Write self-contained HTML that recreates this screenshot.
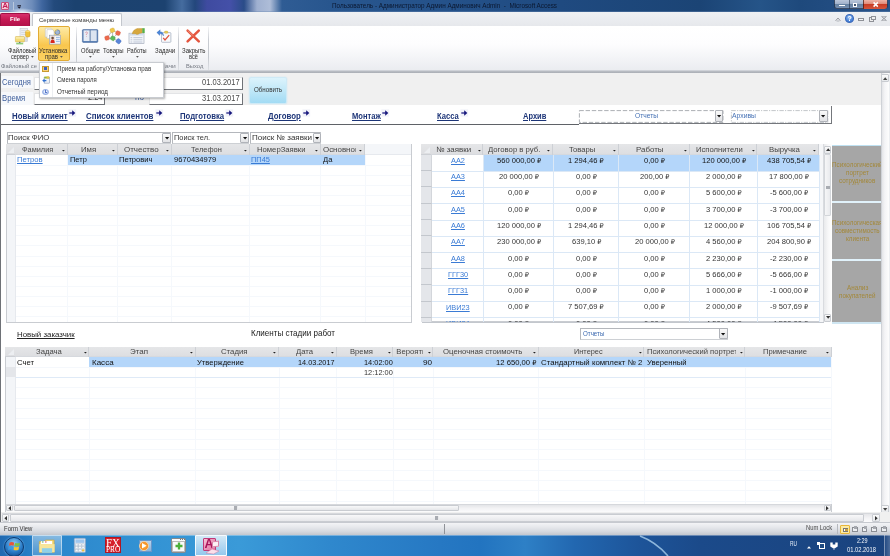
<!DOCTYPE html><html lang="ru"><head><meta charset="utf-8"><title>Microsoft Access</title><style>
*{box-sizing:border-box}
html,body{margin:0;padding:0}
body{width:890px;height:556px;position:relative;overflow:hidden;background:#fff;font-family:"Liberation Sans","DejaVu Sans",sans-serif;font-size:8px;color:#222}
.a{position:absolute}
.t{position:absolute;white-space:nowrap;line-height:1}
.u{text-decoration:underline}
.rb{font-size:.86em}
svg{position:absolute;overflow:visible}
#root{position:absolute;left:0;top:0;width:890px;height:556px;overflow:hidden;will-change:transform;filter:blur(.3px)}
</style></head><body><div id="root">
<div class="a" style="left:0px;top:0px;width:890px;height:12px;background:linear-gradient(90deg,#90a8cc 0,#86a0c8 22px,#6d8cba 32px,#3f669f 42px,#234a7c 54px,#1b426f 75px,#1c4270 165px,#456c9f 182px,#23477c 195px,#3f4ba0 207px,#4450a8 230px,#2a4c88 244px,#9fb0d0 257px,#aebdd8 270px,#2f5c94 282px,#28568e 330px,#25528a 445px,#1f4a80 560px,#1b4475 700px,#255488 760px,#1e497c 800px,#224d82 840px,#28548a 890px)"></div>
<div class="a" style="left:0px;top:10.5px;width:890px;height:1.5px;background:linear-gradient(rgba(20,50,100,.1),rgba(120,150,190,.7))"></div>
<div class="a" style="left:1px;top:2px;width:8px;height:8px;background:linear-gradient(135deg,#fbe3ea,#f2b8c8);border:1px solid #c8507a;border-radius:1px"></div>
<div class="t" style="left:2.2px;top:2.4px;font-size:8px;color:#c41e58;font-weight:bold">A</div>
<div class="a" style="left:8px;top:8px;width:28px;height:4px;background:radial-gradient(ellipse at 50% 100%,rgba(235,243,252,.9),rgba(235,243,252,0) 70%)"></div>
<div class="a" style="left:12.6px;top:2px;width:0.6px;height:8px;background:#b9c8dd"></div>
<svg style="left:16.8px;top:5px" width="4.4" height="4"><rect x="0.4" y="0" width="3.6" height="0.8" fill="#223"/><path d="M0.2 1.6h4l-2 2.2z" fill="#223"/></svg>
<div class="t" style="left:331.8px;top:2.57px;font-size:6.3px;color:#0b1830;transform:scaleX(1.0074);transform-origin:0 0;">Пользователь - Администратор Админ Админович Admin&nbsp; -&nbsp; Microsoft Access</div>
<div class="a" style="left:833.6px;top:0px;width:54.6px;height:9.2px;border:1px solid rgba(20,35,60,.75);border-top:none;border-radius:0 0 3px 3px;background:linear-gradient(#b9c6da 0,#a2b3cc 45%,#64809f 50%,#7690b2 100%)"></div>
<div class="a" style="left:848.6px;top:0px;width:0.8px;height:8.6px;background:rgba(30,45,70,.6)"></div>
<div class="a" style="left:863px;top:0px;width:24.4px;height:8.5px;background:linear-gradient(#eeb3a6 0,#e08a78 45%,#c93c24 50%,#d4553c 100%);border-radius:0 0 2.4px 0;border-left:.8px solid rgba(60,20,15,.7)"></div>
<div class="a" style="left:839px;top:4.7px;width:5.6px;height:1.8px;background:#fff;box-shadow:0 0 .6px #223"></div>
<div class="a" style="left:853px;top:2.6px;width:4.4px;height:4.2px;border:1.2px solid #fff;background:#3a4f70;box-shadow:0 0 .6px #223"></div>
<svg style="left:872.6px;top:1.6px" width="5.4" height="5"><path d="M0.6 0.4L4.8 4.6M4.8 0.4L0.6 4.6" stroke="#fff" stroke-width="1.5"/></svg>
<div class="a" style="left:0px;top:12px;width:890px;height:13.5px;background:linear-gradient(#eff1f4,#e6e8ec)"></div>
<div class="a" style="left:0px;top:12.5px;width:30px;height:13px;background:linear-gradient(#d8306c,#c61a54 45%,#b2124a);border:1px solid #a01044;border-bottom:none;border-radius:2px 2px 0 0"></div>
<div class="t" style="left:10.2px;top:15.55px;font-size:6.2px;color:#fff;font-weight:bold;transform:scaleX(0.9500);transform-origin:0 0;">File</div>
<div class="a" style="left:32px;top:13px;width:90px;height:13px;background:#fff;border:1px solid #c3c7cd;border-bottom:none;border-radius:2px 2px 0 0"></div>
<div class="t" style="left:39.1px;top:17.22px;font-size:6px;color:#3a3a3a;transform:scaleX(1.0031);transform-origin:0 0;">Сервисные команды меню</div>
<svg style="left:835px;top:16.6px" width="6" height="4.6"><path d="M0.6 3.8L3 1L5.4 3.8" fill="none" stroke="#8e9197" stroke-width=".9"/><path d="M1.6 4h2.8" stroke="#8e9197" stroke-width=".6"/></svg>
<div class="a" style="left:844.8px;top:14.2px;width:9px;height:8.6px;background:radial-gradient(circle at 45% 35%,#9cc4f4,#4a84d8 60%,#3a6cc8);border-radius:50%;border:.5px solid #3a68b8"></div>
<div class="t" style="left:847.4px;top:15.2px;font-size:7px;color:#fff;font-weight:bold">?</div>
<div class="a" style="left:858px;top:18.2px;width:6px;height:2.6px;border:.9px solid #8e9197;background:#f4f5f7"></div>
<div class="a" style="left:869px;top:17.2px;width:4.6px;height:4.4px;border:.9px solid #8e9197;background:#eee"></div>
<div class="a" style="left:871px;top:15.7px;width:4.6px;height:4.4px;border:.9px solid #8e9197;background:#eee"></div>
<svg style="left:881.4px;top:16px" width="6" height="5"><path d="M0.6 0.5L5.4 4.5M5.4 0.5L0.6 4.5" stroke="#8e9197" stroke-width=".9"/><path d="M0.6 0.5h4.8M0.6 4.5h4.8" stroke="#8e9197" stroke-width=".5"/></svg>
<div class="a" style="left:0px;top:25.5px;width:890px;height:46px;background:linear-gradient(#fff 0,#fdfdfe 40%,#f3f4f7 70%,#e9ebef 100%)"></div>
<div class="a" style="left:0px;top:70.3px;width:890px;height:1px;background:#cfd2d8"></div>
<div class="a" style="left:0px;top:71.3px;width:890px;height:1.8px;background:linear-gradient(#bcc0c6,#a9adb4)"></div>
<div class="a" style="left:76.3px;top:27px;width:0.7px;height:42.5px;background:linear-gradient(rgba(200,204,210,.2),#c9ccd2 30%,#c4c8ce 70%,rgba(200,204,210,.4))"></div>
<div class="a" style="left:150.8px;top:27px;width:0.7px;height:42.5px;background:linear-gradient(rgba(200,204,210,.2),#c9ccd2 30%,#c4c8ce 70%,rgba(200,204,210,.4))"></div>
<div class="a" style="left:178.2px;top:27px;width:0.7px;height:42.5px;background:linear-gradient(rgba(200,204,210,.2),#c9ccd2 30%,#c4c8ce 70%,rgba(200,204,210,.4))"></div>
<div class="a" style="left:208.3px;top:27px;width:0.7px;height:42.5px;background:linear-gradient(rgba(200,204,210,.2),#c9ccd2 30%,#c4c8ce 70%,rgba(200,204,210,.4))"></div>
<div class="a" style="left:38.2px;top:26.1px;width:31.5px;height:35px;background:linear-gradient(#fdeaa6 0,#fbd978 30%,#f9c64e 55%,#fbd262 100%);border:1px solid #e2ab34;border-radius:2px"></div>
<div class="t" style="left:8px;top:47.50px;font-size:6.5px;color:#2b2b2b;transform:scaleX(0.8995);transform-origin:0 0;">Файловый</div>
<div class="t" style="left:10.5px;top:53.70px;font-size:6.5px;color:#2b2b2b;transform:scaleX(0.8505);transform-origin:0 0;">сервер</div>
<div class="t" style="left:39.3px;top:47.50px;font-size:6.5px;color:#2b2b2b;transform:scaleX(0.9232);transform-origin:0 0;">Установка</div>
<div class="t" style="left:45.1px;top:53.70px;font-size:6.5px;color:#2b2b2b;transform:scaleX(0.9153);transform-origin:0 0;">прав</div>
<div class="t" style="left:81px;top:47.50px;font-size:6.5px;color:#2b2b2b;transform:scaleX(0.8843);transform-origin:0 0;">Общие</div>
<div class="t" style="left:103.2px;top:47.50px;font-size:6.5px;color:#2b2b2b;transform:scaleX(0.9241);transform-origin:0 0;">Товары</div>
<div class="t" style="left:127px;top:47.50px;font-size:6.5px;color:#2b2b2b;transform:scaleX(0.8676);transform-origin:0 0;">Работы</div>
<div class="t" style="left:154.5px;top:47.50px;font-size:6.5px;color:#2b2b2b;transform:scaleX(0.9241);transform-origin:0 0;">Задачи</div>
<div class="t" style="left:182.4px;top:47.50px;font-size:6.5px;color:#2b2b2b;transform:scaleX(0.9347);transform-origin:0 0;">Закрыть</div>
<div class="t" style="left:189px;top:53.70px;font-size:6.5px;color:#2b2b2b;transform:scaleX(0.8722);transform-origin:0 0;">всё</div>
<svg style="left:31px;top:56.3px" width="2.8" height="1.8"><path d="M0 0h2.8L1.4 1.8z" fill="#555"/></svg>
<svg style="left:59.8px;top:56.3px" width="2.8" height="1.8"><path d="M0 0h2.8L1.4 1.8z" fill="#555"/></svg>
<svg style="left:89px;top:56.3px" width="2.8" height="1.8"><path d="M0 0h2.8L1.4 1.8z" fill="#555"/></svg>
<svg style="left:112.4px;top:56.3px" width="2.8" height="1.8"><path d="M0 0h2.8L1.4 1.8z" fill="#555"/></svg>
<svg style="left:135.6px;top:56.3px" width="2.8" height="1.8"><path d="M0 0h2.8L1.4 1.8z" fill="#555"/></svg>
<div class="t" style="left:1.2px;top:62.65px;font-size:6.2px;color:#757a82;transform:scaleX(0.9404);transform-origin:0 0;">Файловый се</div>
<div class="t" style="left:164.5px;top:62.65px;font-size:6.2px;color:#757a82;transform:scaleX(1.0846);transform-origin:0 0;">ачи</div>
<div class="t" style="left:185.5px;top:62.65px;font-size:6.2px;color:#757a82;transform:scaleX(0.9329);transform-origin:0 0;">Выход</div>
<svg style="left:0;top:0" width="220" height="50" viewBox="0 0 220 50"><rect x="20" y="28.3" width="7.6" height="13.2" fill="#eef0f3" stroke="#b9bdc5" stroke-width=".5"/><path d="M21.2 30.4h5M21.2 32.4h5M21.2 34.4h5" stroke="#c3c8d2" stroke-width=".6"/><rect x="24.4" y="37" width="3" height="4.2" fill="#d9dce2"/><rect x="25.5" y="30.6" width="4.6" height="6.4" rx="1.6" fill="#f1c23a" stroke="#c4962a" stroke-width=".4"/><ellipse cx="27.8" cy="31.3" rx="2.1" ry=".8" fill="#f9dc7c"/><rect x="15.4" y="36.6" width="9" height="5.3" rx=".5" fill="#f5dc78" stroke="#cfae4a" stroke-width=".5"/><rect x="15.8" y="37.2" width="8.2" height="1.4" fill="#fbeeb0"/><rect x="16.2" y="42.7" width="7" height="1.7" fill="#8ecb7a"/><rect x="19" y="41.9" width="1.4" height="1" fill="#667"/><path d="M45.3 28.2h5.4l1.6 1.6v7.2h-7z" fill="#fdfdfd" stroke="#b4b8bf" stroke-width=".5"/><path d="M47 29.6h5.4l1.6 1.6v7.2h-7z" fill="#fff" stroke="#b4b8bf" stroke-width=".5"/><circle cx="57.4" cy="32.2" r="2.4" fill="#9db5d8" stroke="#5a6c8c" stroke-width=".6"/><path d="M55.2 31.6a2.3 2.3 0 0 1 2-1.7" stroke="#f0d060" stroke-width=".9" fill="none"/><rect x="49.3" y="35.2" width="11.4" height="8.9" fill="#f2f4f8" stroke="#8a93a3" stroke-width=".6"/><rect x="50.3" y="36.2" width="4.6" height="6.9" fill="#e9d9d4"/><circle cx="52.6" cy="38" r="1.3" fill="#6a4a3a"/><path d="M50.5 43c0-2.6 1-3.4 2.1-3.4s2.1.8 2.1 3.4z" fill="#d8281e"/><path d="M56 37.4h3.8M56 39.4h3.8M56 41.4h3.8" stroke="#8fb2e0" stroke-width=".9"/><rect x="82.4" y="29.6" width="15.4" height="12.8" rx=".8" fill="#5179b0" stroke="#3c5f94" stroke-width=".5"/><rect x="83.5" y="30.3" width="6.3" height="10.8" fill="#e6ecf5"/><rect x="90.4" y="30.3" width="6.3" height="10.8" fill="#dce4f0"/><path d="M90.1 30v11.6" stroke="#6a7f9f" stroke-width=".6"/><path d="M85.4 32.6q1-1.2 2 0q.2 1-1 1.6v.8" stroke="#d87a8a" stroke-width=".7" fill="none"/><circle cx="86.4" cy="36.4" r=".4" fill="#d87a8a"/><path d="M112.4 30.3L107.1 38M112.4 30.3L118 33.1M112.4 30.3L112.8 38.3M112.8 38.3L107.1 38M112.8 38.3L118.5 41.2M112.8 38.3L118 33.1" stroke="#8a8d92" stroke-width=".6"/><rect x="110.2" y="28.2" width="4.4" height="4.2" rx="1.2" fill="#efc84a" stroke="#c9a030" stroke-width=".3" transform="rotate(-20 112.4 30.3)"/><rect x="115.8" y="31" width="4.4" height="4.2" rx="1.2" fill="#ec6a4c" stroke="#c8482e" stroke-width=".3" transform="rotate(20 118 33.1)"/><rect x="104.9" y="35.9" width="4.4" height="4.2" rx="1.2" fill="#ec6a4c" stroke="#c8482e" stroke-width=".3" transform="rotate(-15 107.1 38)"/><rect x="110.6" y="36.2" width="4.4" height="4.2" rx="1.2" fill="#5cb85a" stroke="#3a9038" stroke-width=".3" transform="rotate(30 112.8 38.3)"/><rect x="116.2" y="39" width="4.6" height="4.4" rx="1.2" fill="#5a86d8" stroke="#3a62b0" stroke-width=".3" transform="rotate(40 118.5 41.2)"/><rect x="129" y="33.2" width="15" height="10.4" fill="#f3f5f9" stroke="#9aa3b3" stroke-width=".6"/><rect x="129.4" y="33.6" width="14.2" height="2" fill="#d3deee"/><path d="M130.6 37.6h1.6M133.4 37.6h9M130.6 39.8h1.6M133.4 39.8h9M130.6 42h1.6M133.4 42h9" stroke="#aab6ca" stroke-width=".7"/><path d="M132.2 33.8c.6-3 3-5.4 6.2-5.4l4 .1v4.3l-3 .6c-1 1.2-3 1.3-4 .4z" fill="#d7a83e" stroke="#b08424" stroke-width=".35"/><rect x="142.3" y="28.2" width="2.4" height="4.8" fill="#58b04a"/><rect x="161.5" y="32.6" width="9.4" height="9.7" rx=".8" fill="#f8f9fb" stroke="#8f9bb0" stroke-width=".6"/><rect x="164.4" y="31.1" width="3.6" height="2.2" rx="1" fill="#e8cc5a" stroke="#b99a30" stroke-width=".3"/><path d="M163.2 37.8l1.8 2.2l4.2-4.8" fill="none" stroke="#e0503c" stroke-width="1.2"/><path d="M163.6 36c0-3-1.8-4.4-3.6-4.3l.2-1.9l-3.4 2.8l3 2.8l.1-1.8c1.4 0 2.6.8 3.7 2.4z" fill="#4a86d8" stroke="#2a5cb0" stroke-width=".3"/><path d="M187.6 30.6L198.8 41.4M198.8 30.6L187.6 41.4" stroke="#e4553e" stroke-width="2.5" stroke-linecap="round"/><path d="M188 30.8L193.2 35.8" stroke="#f3a08c" stroke-width=".8" stroke-linecap="round"/></svg>
<div class="a" style="left:0px;top:73px;width:890px;height:449px;background:#fff"></div>
<div class="a" style="left:0px;top:73px;width:1px;height:449px;background:#6e7176"></div>
<div class="a" style="left:1px;top:73.3px;width:879.5px;height:31.8px;background:#f0f0f0"></div>
<div class="a" style="left:880.5px;top:73px;width:8px;height:440px;background:linear-gradient(90deg,#e4e5e8,#f4f4f6 40%,#fdfdfd);border-left:1px solid #cfd2d7"></div>
<div class="a" style="left:888.5px;top:73px;width:1.5px;height:449px;background:#eceef1"></div>
<div class="a" style="left:881px;top:74px;width:7.6px;height:8px;background:linear-gradient(#fbfbfb,#e6e8eb);border:.6px solid #c9ccd1;border-radius:1px"></div>
<svg style="left:882.6px;top:76.5px" width="4.4" height="3"><path d="M0 3L2.2 0.3L4.4 3z" fill="#444"/></svg>
<div class="a" style="left:881px;top:505px;width:7.6px;height:7.6px;background:linear-gradient(#fbfbfb,#e6e8eb);border:.6px solid #c9ccd1;border-radius:1px"></div>
<svg style="left:882.6px;top:507.5px" width="4.4" height="3"><path d="M0 0L2.2 2.7L4.4 0z" fill="#444"/></svg>
<div class="a" style="left:1px;top:76px;width:32px;height:12.3px;background:#f6f8fb"></div>
<div class="a" style="left:1px;top:92.3px;width:32px;height:12.3px;background:#f6f8fb"></div>
<div class="t" style="left:2px;top:78.30px;font-size:8.5px;color:#3f5f9c;transform:scaleX(0.8892);transform-origin:0 0;">Сегодня</div>
<div class="t" style="left:2px;top:93.80px;font-size:8.5px;color:#3f5f9c;transform:scaleX(0.9073);transform-origin:0 0;">Время</div>
<div class="a" style="left:34px;top:77.2px;width:71px;height:12.4px;background:#fff;border-top:1px solid #e3e4e6;border-left:1px solid #e3e4e6;border-right:1.2px solid #6f7277;border-bottom:1.2px solid #6f7277"></div>
<div class="a" style="left:34px;top:92.5px;width:71px;height:12.4px;background:#fff;border-top:1px solid #e3e4e6;border-left:1px solid #e3e4e6;border-right:1.2px solid #6f7277;border-bottom:1.2px solid #6f7277"></div>
<div class="t" style="left:88.4361px;top:94.06px;font-size:8.2px;color:#4a4a4a;transform:scaleX(0.9000);transform-origin:0 0;">2:24</div>
<div class="t" style="left:135.2px;top:94.06px;font-size:8.2px;color:#4a6aa6;transform:scaleX(0.9999);transform-origin:0 0;">по</div>
<div class="a" style="left:149px;top:77.2px;width:93.5px;height:12.4px;background:#fff;border-top:1px solid #e3e4e6;border-left:1px solid #e3e4e6;border-right:1.2px solid #6f7277;border-bottom:1.2px solid #6f7277"></div>
<div class="a" style="left:149px;top:92.5px;width:93.5px;height:12.4px;background:#fff;border-top:1px solid #e3e4e6;border-left:1px solid #e3e4e6;border-right:1.2px solid #6f7277;border-bottom:1.2px solid #6f7277"></div>
<div class="t" style="left:201.6px;top:78.86px;font-size:8.2px;color:#4a4a4a;transform:scaleX(0.9186);transform-origin:0 0;">01.03.2017</div>
<div class="t" style="left:201.6px;top:94.56px;font-size:8.2px;color:#4a4a4a;transform:scaleX(0.9186);transform-origin:0 0;">31.03.2017</div>
<div class="a" style="left:249.3px;top:77px;width:37.6px;height:26.6px;background:linear-gradient(#dcf3fc,#c0e8f8 50%,#a2dbf4);border:1px solid #cfeaf6;border-radius:2px;box-shadow:0 0 1.5px #bfe3f3"></div>
<div class="t" style="left:253.5px;top:87.41px;font-size:6.6px;color:#333;transform:scaleX(0.9403);transform-origin:0 0;">Обновить</div>
<div class="t" style="left:11.5px;top:111.90px;font-size:8.5px;color:#1d3578;font-weight:bold;transform:scaleX(0.9203);transform-origin:0 0;text-decoration:underline;text-decoration-thickness:.8px;text-underline-offset:.6px">Новый клиент</div>
<svg style="left:68.8px;top:110.4px" width="6.6" height="6" viewBox="0 0 6.6 6"><rect x="-0.6" y="-0.6" width="7.8" height="7.2" fill="#f1f2f9"/><path d="M0.3 3h3.6" stroke="#16167c" stroke-width="1.25"/><path d="M3.2 0.3L6.3 3L3.2 5.7z" fill="#16167c"/></svg>
<div class="t" style="left:86.3px;top:111.90px;font-size:8.5px;color:#1d3578;font-weight:bold;transform:scaleX(0.9315);transform-origin:0 0;text-decoration:underline;text-decoration-thickness:.8px;text-underline-offset:.6px">Список клиентов</div>
<svg style="left:155.5px;top:110.4px" width="6.6" height="6" viewBox="0 0 6.6 6"><rect x="-0.6" y="-0.6" width="7.8" height="7.2" fill="#f1f2f9"/><path d="M0.3 3h3.6" stroke="#16167c" stroke-width="1.25"/><path d="M3.2 0.3L6.3 3L3.2 5.7z" fill="#16167c"/></svg>
<div class="t" style="left:179.8px;top:111.90px;font-size:8.5px;color:#1d3578;font-weight:bold;transform:scaleX(0.9104);transform-origin:0 0;text-decoration:underline;text-decoration-thickness:.8px;text-underline-offset:.6px">Подготовка</div>
<svg style="left:226.2px;top:110.4px" width="6.6" height="6" viewBox="0 0 6.6 6"><rect x="-0.6" y="-0.6" width="7.8" height="7.2" fill="#f1f2f9"/><path d="M0.3 3h3.6" stroke="#16167c" stroke-width="1.25"/><path d="M3.2 0.3L6.3 3L3.2 5.7z" fill="#16167c"/></svg>
<div class="t" style="left:268.1px;top:111.90px;font-size:8.5px;color:#1d3578;font-weight:bold;transform:scaleX(0.9244);transform-origin:0 0;text-decoration:underline;text-decoration-thickness:.8px;text-underline-offset:.6px">Договор</div>
<svg style="left:302.8px;top:110.4px" width="6.6" height="6" viewBox="0 0 6.6 6"><rect x="-0.6" y="-0.6" width="7.8" height="7.2" fill="#f1f2f9"/><path d="M0.3 3h3.6" stroke="#16167c" stroke-width="1.25"/><path d="M3.2 0.3L6.3 3L3.2 5.7z" fill="#16167c"/></svg>
<div class="t" style="left:352px;top:111.90px;font-size:8.5px;color:#1d3578;font-weight:bold;transform:scaleX(0.8910);transform-origin:0 0;text-decoration:underline;text-decoration-thickness:.8px;text-underline-offset:.6px">Монтаж</div>
<svg style="left:382.4px;top:110.4px" width="6.6" height="6" viewBox="0 0 6.6 6"><rect x="-0.6" y="-0.6" width="7.8" height="7.2" fill="#f1f2f9"/><path d="M0.3 3h3.6" stroke="#16167c" stroke-width="1.25"/><path d="M3.2 0.3L6.3 3L3.2 5.7z" fill="#16167c"/></svg>
<div class="t" style="left:437.4px;top:111.90px;font-size:8.5px;color:#1d3578;font-weight:bold;transform:scaleX(0.8963);transform-origin:0 0;text-decoration:underline;text-decoration-thickness:.8px;text-underline-offset:.6px">Касса</div>
<svg style="left:461px;top:110.4px" width="6.6" height="6" viewBox="0 0 6.6 6"><rect x="-0.6" y="-0.6" width="7.8" height="7.2" fill="#f1f2f9"/><path d="M0.3 3h3.6" stroke="#16167c" stroke-width="1.25"/><path d="M3.2 0.3L6.3 3L3.2 5.7z" fill="#16167c"/></svg>
<div class="t" style="left:523.4px;top:111.90px;font-size:8.5px;color:#1d3578;font-weight:bold;transform:scaleX(0.8827);transform-origin:0 0;text-decoration:underline;text-decoration-thickness:.8px;text-underline-offset:.6px">Архив</div>
<div class="a" style="left:1px;top:124.3px;width:578.3px;height:1.1px;background:#5f6267"></div>
<div class="a" style="left:578.5px;top:106px;width:253.6px;height:18.3px;border-right:1px solid #74777c;border-bottom:1px solid #74777c"></div>
<svg style="left:0;top:0" width="890" height="130"><rect x="579.4" y="110.6" width="143.6" height="11.8" fill="none" stroke="#a3a6ab" stroke-width=".9" stroke-dasharray="4.4 1.8"/><rect x="731.4" y="110.6" width="96.4" height="11.8" fill="none" stroke="#b4b7bc" stroke-width=".8" stroke-dasharray="4.4 1.2 1.2 1.2"/></svg>
<div class="t" style="left:635px;top:113.08px;font-size:6.4px;color:#4470b4;transform:scaleX(1.0387);transform-origin:0 0;">Отчеты</div>
<div class="t" style="left:732.3px;top:113.08px;font-size:6.4px;color:#4470b4;transform:scaleX(1.0662);transform-origin:0 0;">Архивы</div>
<div class="a" style="left:714.7px;top:110.3px;width:8.6px;height:12px;background:linear-gradient(#fafafa,#e2e3e6);border:.8px solid #b0b3b9;border-radius:1px"></div>
<svg style="left:716.9px;top:115.3px" width="4.2" height="2.4"><path d="M0 0h4.2L2.1 2.4z" fill="#111"/></svg>
<div class="a" style="left:819px;top:110.3px;width:8.6px;height:12px;background:linear-gradient(#fafafa,#e2e3e6);border:.8px solid #b0b3b9;border-radius:1px"></div>
<svg style="left:821.2px;top:115.3px" width="4.2" height="2.4"><path d="M0 0h4.2L2.1 2.4z" fill="#111"/></svg>
<div class="a" style="left:6.8px;top:132.3px;width:164.4px;height:11.4px;background:#fff;border:1px solid #cdd0d4;border-top-color:#b4b7bc;border-left-color:#b4b7bc"></div>
<div class="t" style="left:7.6px;top:133.87px;font-size:7.6px;color:#333;transform:scaleX(1.0267);transform-origin:0 0;">Поиск ФИО</div>
<div class="a" style="left:162.4px;top:133px;width:8.4px;height:10.1px;background:linear-gradient(#fafafa,#e2e3e6);border:.8px solid #b0b3b9;border-radius:1px"></div>
<svg style="left:164.5px;top:137.05px" width="4.2" height="2.4"><path d="M0 0h4.2L2.1 2.4z" fill="#111"/></svg>
<div class="a" style="left:172.4px;top:132.3px;width:76.8px;height:11.4px;background:#fff;border:1px solid #cdd0d4;border-top-color:#b4b7bc;border-left-color:#b4b7bc"></div>
<div class="t" style="left:174.2px;top:133.87px;font-size:7.6px;color:#333;transform:scaleX(0.9726);transform-origin:0 0;">Поиск тел.</div>
<div class="a" style="left:240.4px;top:133px;width:8.4px;height:10.1px;background:linear-gradient(#fafafa,#e2e3e6);border:.8px solid #b0b3b9;border-radius:1px"></div>
<svg style="left:242.5px;top:137.05px" width="4.2" height="2.4"><path d="M0 0h4.2L2.1 2.4z" fill="#111"/></svg>
<div class="a" style="left:250.4px;top:132.3px;width:71px;height:11.4px;background:#fff;border:1px solid #cdd0d4;border-top-color:#b4b7bc;border-left-color:#b4b7bc"></div>
<div class="a" style="left:251px;top:133px;width:62px;height:10px;overflow:hidden">
<div class="t" style="left:0.6px;top:0.87px;font-size:7.6px;color:#333;transform:scaleX(1.0550);transform-origin:0 0;">Поиск № заявки</div>
</div>
<div class="a" style="left:312.6px;top:133px;width:8.4px;height:10.1px;background:linear-gradient(#fafafa,#e2e3e6);border:.8px solid #b0b3b9;border-radius:1px"></div>
<svg style="left:314.7px;top:137.05px" width="4.2" height="2.4"><path d="M0 0h4.2L2.1 2.4z" fill="#111"/></svg>
<div class="a" style="left:6px;top:144px;width:406px;height:178.5px;background:#fff;border:1px solid #c9ccd1"></div>
<div class="a" style="left:6px;top:144px;width:10px;height:11px;background:linear-gradient(#e5e6e8,#dddee1);border-right:1px solid #cdd0d5;border-bottom:1px solid #cdd0d5"></div>
<svg style="left:8px;top:147px" width="6" height="6"><path d="M6 0L6 6L0 6z" fill="#eceef1"/></svg>
<div class="a" style="left:15px;top:144px;width:350px;height:11px;background:linear-gradient(#e5e6e8,#dddee1);border-bottom:1px solid #d6d9de"></div>
<div class="a" style="left:66.7px;top:144px;width:1px;height:11px;background:#cdd0d5"></div>
<div class="t" style="left:21.7px;top:146.38px;font-size:7.7px;color:#454545;transform:scaleX(0.9573);transform-origin:0 0;">Фамилия</div>
<svg style="left:61.8px;top:149.5px" width="2.8" height="1.6"><path d="M0 0h2.8L1.4 1.6z" fill="#222"/></svg>
<div class="a" style="left:116.6px;top:144px;width:1px;height:11px;background:#cdd0d5"></div>
<div class="t" style="left:80.9px;top:146.38px;font-size:7.7px;color:#454545;transform:scaleX(1.0135);transform-origin:0 0;">Имя</div>
<svg style="left:111.7px;top:149.5px" width="2.8" height="1.6"><path d="M0 0h2.8L1.4 1.6z" fill="#222"/></svg>
<div class="a" style="left:170.6px;top:144px;width:1px;height:11px;background:#cdd0d5"></div>
<div class="t" style="left:123.5px;top:146.38px;font-size:7.7px;color:#454545;transform:scaleX(1.0340);transform-origin:0 0;">Отчество</div>
<svg style="left:165.7px;top:149.5px" width="2.8" height="1.6"><path d="M0 0h2.8L1.4 1.6z" fill="#222"/></svg>
<div class="a" style="left:248.5px;top:144px;width:1px;height:11px;background:#cdd0d5"></div>
<div class="t" style="left:190.9px;top:146.38px;font-size:7.7px;color:#454545;transform:scaleX(0.9653);transform-origin:0 0;">Телефон</div>
<svg style="left:243.6px;top:149.5px" width="2.8" height="1.6"><path d="M0 0h2.8L1.4 1.6z" fill="#222"/></svg>
<div class="a" style="left:319.9px;top:144px;width:1px;height:11px;background:#cdd0d5"></div>
<div class="t" style="left:256.8px;top:146.38px;font-size:7.7px;color:#454545;transform:scaleX(1.0007);transform-origin:0 0;">НомерЗаявки</div>
<svg style="left:315px;top:149.5px" width="2.8" height="1.6"><path d="M0 0h2.8L1.4 1.6z" fill="#222"/></svg>
<div class="a" style="left:364px;top:144px;width:1px;height:11px;background:#cdd0d5"></div>
<div class="a" style="left:323.4px;top:144px;width:32.7px;height:11px;overflow:hidden">
<div class="t" style="left:0px;top:2.38px;font-size:7.7px;color:#454545;transform:scaleX(1.0300);transform-origin:0 0;">Основной</div>
</div>
<svg style="left:359.1px;top:149.5px" width="2.8" height="1.6"><path d="M0 0h2.8L1.4 1.6z" fill="#222"/></svg>
<div class="a" style="left:365px;top:144px;width:46.3px;height:11px;background:#f4f6f9;border-bottom:1px solid #e6e9ee"></div>
<div class="a" style="left:6.8px;top:154.9px;width:9.2px;height:167px;background:#f3f5f8;border-right:1px solid #e6e9ee"></div>
<div class="a" style="left:16px;top:164.6px;width:395px;height:0.7px;background:#f5f8fc"></div>
<div class="a" style="left:16px;top:174.7px;width:395px;height:0.7px;background:#f5f8fc"></div>
<div class="a" style="left:16px;top:184.8px;width:395px;height:0.7px;background:#f5f8fc"></div>
<div class="a" style="left:16px;top:194.9px;width:395px;height:0.7px;background:#f5f8fc"></div>
<div class="a" style="left:16px;top:205px;width:395px;height:0.7px;background:#f5f8fc"></div>
<div class="a" style="left:16px;top:215.1px;width:395px;height:0.7px;background:#f5f8fc"></div>
<div class="a" style="left:16px;top:225.2px;width:395px;height:0.7px;background:#f5f8fc"></div>
<div class="a" style="left:16px;top:235.3px;width:395px;height:0.7px;background:#f5f8fc"></div>
<div class="a" style="left:16px;top:245.4px;width:395px;height:0.7px;background:#f5f8fc"></div>
<div class="a" style="left:16px;top:255.5px;width:395px;height:0.7px;background:#f5f8fc"></div>
<div class="a" style="left:16px;top:265.6px;width:395px;height:0.7px;background:#f5f8fc"></div>
<div class="a" style="left:16px;top:275.7px;width:395px;height:0.7px;background:#f5f8fc"></div>
<div class="a" style="left:16px;top:285.8px;width:395px;height:0.7px;background:#f5f8fc"></div>
<div class="a" style="left:16px;top:295.9px;width:395px;height:0.7px;background:#f5f8fc"></div>
<div class="a" style="left:16px;top:306px;width:395px;height:0.7px;background:#f5f8fc"></div>
<div class="a" style="left:16px;top:316.1px;width:395px;height:0.7px;background:#f5f8fc"></div>
<div class="a" style="left:67.2px;top:154.9px;width:0.7px;height:167px;background:#f5f8fc"></div>
<div class="a" style="left:117.1px;top:154.9px;width:0.7px;height:167px;background:#f5f8fc"></div>
<div class="a" style="left:171.1px;top:154.9px;width:0.7px;height:167px;background:#f5f8fc"></div>
<div class="a" style="left:249px;top:154.9px;width:0.7px;height:167px;background:#f5f8fc"></div>
<div class="a" style="left:320.4px;top:154.9px;width:0.7px;height:167px;background:#f5f8fc"></div>
<div class="a" style="left:364.5px;top:154.9px;width:0.7px;height:167px;background:#f5f8fc"></div>
<div class="a" style="left:67.7px;top:154.9px;width:297.3px;height:10.1px;background:#b4d6fa"></div>
<div class="t" style="left:16.9px;top:156.38px;font-size:7.7px;color:#3a7bd5;transform:scaleX(0.9962);transform-origin:0 0;text-decoration:underline;text-decoration-thickness:.7px">Петров</div>
<div class="t" style="left:69.7px;top:156.38px;font-size:7.7px;color:#111;transform:scaleX(0.9701);transform-origin:0 0;">Петр</div>
<div class="t" style="left:119.3px;top:156.38px;font-size:7.7px;color:#111;transform:scaleX(0.9850);transform-origin:0 0;">Петрович</div>
<div class="t" style="left:173.7px;top:156.38px;font-size:7.7px;color:#111;transform:scaleX(0.9877);transform-origin:0 0;">9670434979</div>
<div class="t" style="left:251.2px;top:156.38px;font-size:7.7px;color:#3a7bd5;transform:scaleX(0.9626);transform-origin:0 0;text-decoration:underline;text-decoration-thickness:.7px">ПП45</div>
<div class="t" style="left:322.6px;top:156.38px;font-size:7.7px;color:#111;transform:scaleX(0.9850);transform-origin:0 0;">Да</div>
<div class="a" style="left:421px;top:144px;width:411px;height:178.3px;background:#fff;border:1px solid #c9ccd1;border-right:none"></div>
<div class="a" style="left:421px;top:144px;width:10.6px;height:11px;background:linear-gradient(#e5e6e8,#dddee1);border-right:1px solid #cdd0d5;border-bottom:1px solid #cdd0d5"></div>
<svg style="left:424px;top:147px" width="6" height="6"><path d="M6 0L6 6L0 6z" fill="#eceef1"/></svg>
<div class="a" style="left:430.6px;top:144px;width:388.4px;height:11px;background:linear-gradient(#e5e6e8,#dddee1);border-bottom:1px solid #d6d9de"></div>
<div class="a" style="left:482.4px;top:144px;width:1px;height:11px;background:#cdd0d5"></div>
<div class="t" style="left:436.1px;top:146.38px;font-size:7.7px;color:#454545;transform:scaleX(1.0281);transform-origin:0 0;">№ заявки</div>
<svg style="left:477.5px;top:149.5px" width="2.8" height="1.6"><path d="M0 0h2.8L1.4 1.6z" fill="#222"/></svg>
<div class="a" style="left:552px;top:144px;width:1px;height:11px;background:#cdd0d5"></div>
<div class="t" style="left:487.6px;top:146.38px;font-size:7.7px;color:#454545;transform:scaleX(1.0058);transform-origin:0 0;">Договор в руб.</div>
<svg style="left:547.1px;top:149.5px" width="2.8" height="1.6"><path d="M0 0h2.8L1.4 1.6z" fill="#222"/></svg>
<div class="a" style="left:617.6px;top:144px;width:1px;height:11px;background:#cdd0d5"></div>
<div class="t" style="left:569px;top:146.38px;font-size:7.7px;color:#454545;transform:scaleX(0.9935);transform-origin:0 0;">Товары</div>
<svg style="left:612.7px;top:149.5px" width="2.8" height="1.6"><path d="M0 0h2.8L1.4 1.6z" fill="#222"/></svg>
<div class="a" style="left:688.5px;top:144px;width:1px;height:11px;background:#cdd0d5"></div>
<div class="t" style="left:636.4px;top:146.38px;font-size:7.7px;color:#454545;transform:scaleX(1.0268);transform-origin:0 0;">Работы</div>
<svg style="left:683.6px;top:149.5px" width="2.8" height="1.6"><path d="M0 0h2.8L1.4 1.6z" fill="#222"/></svg>
<div class="a" style="left:756.4px;top:144px;width:1px;height:11px;background:#cdd0d5"></div>
<div class="t" style="left:696.1px;top:146.38px;font-size:7.7px;color:#454545;transform:scaleX(0.9961);transform-origin:0 0;">Исполнители</div>
<svg style="left:751.5px;top:149.5px" width="2.8" height="1.6"><path d="M0 0h2.8L1.4 1.6z" fill="#222"/></svg>
<div class="a" style="left:818px;top:144px;width:1px;height:11px;background:#cdd0d5"></div>
<div class="t" style="left:768.6px;top:146.38px;font-size:7.7px;color:#454545;transform:scaleX(1.0142);transform-origin:0 0;">Выручка</div>
<svg style="left:813.1px;top:149.5px" width="2.8" height="1.6"><path d="M0 0h2.8L1.4 1.6z" fill="#222"/></svg>
<div class="a" style="left:819px;top:144px;width:4.5px;height:178px;background:#f5f6f8"></div>
<div class="a" style="left:0;top:154.9px;width:824px;height:167.2px;overflow:hidden">
<div class="a" style="left:421px;top:0px;width:10.6px;height:16.3px;background:#e4e6ea;border-bottom:1px solid #c3c7cd;border-right:1px solid #d3d6db"></div>
<div class="a" style="left:483.4px;top:0px;width:335.6px;height:16.3px;background:#b4d6fa"></div>
<div class="a" style="left:431.6px;top:15.8px;width:387.4px;height:0.8px;background:#dbe8f6"></div>
<div class="t" style="left:451.033px;top:1.97px;font-size:7.6px;color:#3a7bd5;transform:scaleX(0.9700);transform-origin:0 0;text-decoration:underline;text-decoration-thickness:.7px">АА2</div>
<div class="t" style="left:496.591px;top:1.88px;font-size:7.7px;color:#141414;transform:scaleX(0.9850);transform-origin:0 0;">560 000,00 <span class="rb">₽</span></div>
<div class="t" style="left:568.41px;top:1.88px;font-size:7.7px;color:#141414;transform:scaleX(0.9850);transform-origin:0 0;">1 294,46 <span class="rb">₽</span></div>
<div class="t" style="left:644.04px;top:1.88px;font-size:7.7px;color:#141414;transform:scaleX(0.9850);transform-origin:0 0;">0,00 <span class="rb">₽</span></div>
<div class="t" style="left:701.841px;top:1.88px;font-size:7.7px;color:#141414;transform:scaleX(0.9850);transform-origin:0 0;">120 000,00 <span class="rb">₽</span></div>
<div class="t" style="left:766.591px;top:1.88px;font-size:7.7px;color:#141414;transform:scaleX(0.9850);transform-origin:0 0;">438 705,54 <span class="rb">₽</span></div>
<div class="a" style="left:421px;top:16.3px;width:10.6px;height:16.3px;background:#e4e6ea;border-bottom:1px solid #c3c7cd;border-right:1px solid #d3d6db"></div>
<div class="a" style="left:431.6px;top:32.1px;width:387.4px;height:0.8px;background:#dbe8f6"></div>
<div class="t" style="left:451.033px;top:18.27px;font-size:7.6px;color:#3a7bd5;transform:scaleX(0.9700);transform-origin:0 0;text-decoration:underline;text-decoration-thickness:.7px">АА3</div>
<div class="t" style="left:498.7px;top:18.18px;font-size:7.7px;color:#363636;transform:scaleX(0.9850);transform-origin:0 0;">20 000,00 <span class="rb">₽</span></div>
<div class="t" style="left:575.79px;top:18.18px;font-size:7.7px;color:#363636;transform:scaleX(0.9850);transform-origin:0 0;">0,00 <span class="rb">₽</span></div>
<div class="t" style="left:639.822px;top:18.18px;font-size:7.7px;color:#363636;transform:scaleX(0.9850);transform-origin:0 0;">200,00 <span class="rb">₽</span></div>
<div class="t" style="left:706.06px;top:18.18px;font-size:7.7px;color:#363636;transform:scaleX(0.9850);transform-origin:0 0;">2 000,00 <span class="rb">₽</span></div>
<div class="t" style="left:768.7px;top:18.18px;font-size:7.7px;color:#363636;transform:scaleX(0.9850);transform-origin:0 0;">17 800,00 <span class="rb">₽</span></div>
<div class="a" style="left:421px;top:32.6px;width:10.6px;height:16.3px;background:#e4e6ea;border-bottom:1px solid #c3c7cd;border-right:1px solid #d3d6db"></div>
<div class="a" style="left:431.6px;top:48.4px;width:387.4px;height:0.8px;background:#dbe8f6"></div>
<div class="t" style="left:451.033px;top:34.57px;font-size:7.6px;color:#3a7bd5;transform:scaleX(0.9700);transform-origin:0 0;text-decoration:underline;text-decoration-thickness:.7px">АА4</div>
<div class="t" style="left:508.19px;top:34.48px;font-size:7.7px;color:#363636;transform:scaleX(0.9850);transform-origin:0 0;">0,00 <span class="rb">₽</span></div>
<div class="t" style="left:575.79px;top:34.48px;font-size:7.7px;color:#363636;transform:scaleX(0.9850);transform-origin:0 0;">0,00 <span class="rb">₽</span></div>
<div class="t" style="left:644.04px;top:34.48px;font-size:7.7px;color:#363636;transform:scaleX(0.9850);transform-origin:0 0;">0,00 <span class="rb">₽</span></div>
<div class="t" style="left:706.06px;top:34.48px;font-size:7.7px;color:#363636;transform:scaleX(0.9850);transform-origin:0 0;">5 600,00 <span class="rb">₽</span></div>
<div class="t" style="left:769.547px;top:34.48px;font-size:7.7px;color:#363636;transform:scaleX(0.9850);transform-origin:0 0;">-5 600,00 <span class="rb">₽</span></div>
<div class="a" style="left:421px;top:48.9px;width:10.6px;height:16.3px;background:#e4e6ea;border-bottom:1px solid #c3c7cd;border-right:1px solid #d3d6db"></div>
<div class="a" style="left:431.6px;top:64.7px;width:387.4px;height:0.8px;background:#dbe8f6"></div>
<div class="t" style="left:451.033px;top:50.87px;font-size:7.6px;color:#3a7bd5;transform:scaleX(0.9700);transform-origin:0 0;text-decoration:underline;text-decoration-thickness:.7px">АА5</div>
<div class="t" style="left:508.19px;top:50.78px;font-size:7.7px;color:#363636;transform:scaleX(0.9850);transform-origin:0 0;">0,00 <span class="rb">₽</span></div>
<div class="t" style="left:575.79px;top:50.78px;font-size:7.7px;color:#363636;transform:scaleX(0.9850);transform-origin:0 0;">0,00 <span class="rb">₽</span></div>
<div class="t" style="left:644.04px;top:50.78px;font-size:7.7px;color:#363636;transform:scaleX(0.9850);transform-origin:0 0;">0,00 <span class="rb">₽</span></div>
<div class="t" style="left:706.06px;top:50.78px;font-size:7.7px;color:#363636;transform:scaleX(0.9850);transform-origin:0 0;">3 700,00 <span class="rb">₽</span></div>
<div class="t" style="left:769.547px;top:50.78px;font-size:7.7px;color:#363636;transform:scaleX(0.9850);transform-origin:0 0;">-3 700,00 <span class="rb">₽</span></div>
<div class="a" style="left:421px;top:65.2px;width:10.6px;height:16.3px;background:#e4e6ea;border-bottom:1px solid #c3c7cd;border-right:1px solid #d3d6db"></div>
<div class="a" style="left:431.6px;top:81px;width:387.4px;height:0.8px;background:#dbe8f6"></div>
<div class="t" style="left:451.033px;top:67.17px;font-size:7.6px;color:#3a7bd5;transform:scaleX(0.9700);transform-origin:0 0;text-decoration:underline;text-decoration-thickness:.7px">АА6</div>
<div class="t" style="left:496.591px;top:67.08px;font-size:7.7px;color:#363636;transform:scaleX(0.9850);transform-origin:0 0;">120 000,00 <span class="rb">₽</span></div>
<div class="t" style="left:568.41px;top:67.08px;font-size:7.7px;color:#363636;transform:scaleX(0.9850);transform-origin:0 0;">1 294,46 <span class="rb">₽</span></div>
<div class="t" style="left:644.04px;top:67.08px;font-size:7.7px;color:#363636;transform:scaleX(0.9850);transform-origin:0 0;">0,00 <span class="rb">₽</span></div>
<div class="t" style="left:703.95px;top:67.08px;font-size:7.7px;color:#363636;transform:scaleX(0.9850);transform-origin:0 0;">12 000,00 <span class="rb">₽</span></div>
<div class="t" style="left:766.591px;top:67.08px;font-size:7.7px;color:#363636;transform:scaleX(0.9850);transform-origin:0 0;">106 705,54 <span class="rb">₽</span></div>
<div class="a" style="left:421px;top:81.5px;width:10.6px;height:16.3px;background:#e4e6ea;border-bottom:1px solid #c3c7cd;border-right:1px solid #d3d6db"></div>
<div class="a" style="left:431.6px;top:97.3px;width:387.4px;height:0.8px;background:#dbe8f6"></div>
<div class="t" style="left:451.033px;top:83.47px;font-size:7.6px;color:#3a7bd5;transform:scaleX(0.9700);transform-origin:0 0;text-decoration:underline;text-decoration-thickness:.7px">АА7</div>
<div class="t" style="left:496.591px;top:83.38px;font-size:7.7px;color:#363636;transform:scaleX(0.9850);transform-origin:0 0;">230 000,00 <span class="rb">₽</span></div>
<div class="t" style="left:571.572px;top:83.38px;font-size:7.7px;color:#363636;transform:scaleX(0.9850);transform-origin:0 0;">639,10 <span class="rb">₽</span></div>
<div class="t" style="left:634.55px;top:83.38px;font-size:7.7px;color:#363636;transform:scaleX(0.9850);transform-origin:0 0;">20 000,00 <span class="rb">₽</span></div>
<div class="t" style="left:706.06px;top:83.38px;font-size:7.7px;color:#363636;transform:scaleX(0.9850);transform-origin:0 0;">4 560,00 <span class="rb">₽</span></div>
<div class="t" style="left:766.591px;top:83.38px;font-size:7.7px;color:#363636;transform:scaleX(0.9850);transform-origin:0 0;">204 800,90 <span class="rb">₽</span></div>
<div class="a" style="left:421px;top:97.8px;width:10.6px;height:16.3px;background:#e4e6ea;border-bottom:1px solid #c3c7cd;border-right:1px solid #d3d6db"></div>
<div class="a" style="left:431.6px;top:113.6px;width:387.4px;height:0.8px;background:#dbe8f6"></div>
<div class="t" style="left:451.033px;top:99.77px;font-size:7.6px;color:#3a7bd5;transform:scaleX(0.9700);transform-origin:0 0;text-decoration:underline;text-decoration-thickness:.7px">АА8</div>
<div class="t" style="left:508.19px;top:99.68px;font-size:7.7px;color:#363636;transform:scaleX(0.9850);transform-origin:0 0;">0,00 <span class="rb">₽</span></div>
<div class="t" style="left:575.79px;top:99.68px;font-size:7.7px;color:#363636;transform:scaleX(0.9850);transform-origin:0 0;">0,00 <span class="rb">₽</span></div>
<div class="t" style="left:644.04px;top:99.68px;font-size:7.7px;color:#363636;transform:scaleX(0.9850);transform-origin:0 0;">0,00 <span class="rb">₽</span></div>
<div class="t" style="left:706.06px;top:99.68px;font-size:7.7px;color:#363636;transform:scaleX(0.9850);transform-origin:0 0;">2 230,00 <span class="rb">₽</span></div>
<div class="t" style="left:769.547px;top:99.68px;font-size:7.7px;color:#363636;transform:scaleX(0.9850);transform-origin:0 0;">-2 230,00 <span class="rb">₽</span></div>
<div class="a" style="left:421px;top:114.1px;width:10.6px;height:16.3px;background:#e4e6ea;border-bottom:1px solid #c3c7cd;border-right:1px solid #d3d6db"></div>
<div class="a" style="left:431.6px;top:129.9px;width:387.4px;height:0.8px;background:#dbe8f6"></div>
<div class="t" style="left:447.912px;top:116.07px;font-size:7.6px;color:#3a7bd5;transform:scaleX(0.9700);transform-origin:0 0;text-decoration:underline;text-decoration-thickness:.7px">ГГГ30</div>
<div class="t" style="left:508.19px;top:115.98px;font-size:7.7px;color:#363636;transform:scaleX(0.9850);transform-origin:0 0;">0,00 <span class="rb">₽</span></div>
<div class="t" style="left:575.79px;top:115.98px;font-size:7.7px;color:#363636;transform:scaleX(0.9850);transform-origin:0 0;">0,00 <span class="rb">₽</span></div>
<div class="t" style="left:644.04px;top:115.98px;font-size:7.7px;color:#363636;transform:scaleX(0.9850);transform-origin:0 0;">0,00 <span class="rb">₽</span></div>
<div class="t" style="left:706.06px;top:115.98px;font-size:7.7px;color:#363636;transform:scaleX(0.9850);transform-origin:0 0;">5 666,00 <span class="rb">₽</span></div>
<div class="t" style="left:769.547px;top:115.98px;font-size:7.7px;color:#363636;transform:scaleX(0.9850);transform-origin:0 0;">-5 666,00 <span class="rb">₽</span></div>
<div class="a" style="left:421px;top:130.4px;width:10.6px;height:16.3px;background:#e4e6ea;border-bottom:1px solid #c3c7cd;border-right:1px solid #d3d6db"></div>
<div class="a" style="left:431.6px;top:146.2px;width:387.4px;height:0.8px;background:#dbe8f6"></div>
<div class="t" style="left:447.912px;top:132.37px;font-size:7.6px;color:#3a7bd5;transform:scaleX(0.9700);transform-origin:0 0;text-decoration:underline;text-decoration-thickness:.7px">ГГГ31</div>
<div class="t" style="left:508.19px;top:132.28px;font-size:7.7px;color:#363636;transform:scaleX(0.9850);transform-origin:0 0;">0,00 <span class="rb">₽</span></div>
<div class="t" style="left:575.79px;top:132.28px;font-size:7.7px;color:#363636;transform:scaleX(0.9850);transform-origin:0 0;">0,00 <span class="rb">₽</span></div>
<div class="t" style="left:644.04px;top:132.28px;font-size:7.7px;color:#363636;transform:scaleX(0.9850);transform-origin:0 0;">0,00 <span class="rb">₽</span></div>
<div class="t" style="left:706.06px;top:132.28px;font-size:7.7px;color:#363636;transform:scaleX(0.9850);transform-origin:0 0;">1 000,00 <span class="rb">₽</span></div>
<div class="t" style="left:769.547px;top:132.28px;font-size:7.7px;color:#363636;transform:scaleX(0.9850);transform-origin:0 0;">-1 000,00 <span class="rb">₽</span></div>
<div class="a" style="left:421px;top:146.7px;width:10.6px;height:16.3px;background:#e4e6ea;border-bottom:1px solid #c3c7cd;border-right:1px solid #d3d6db"></div>
<div class="a" style="left:431.6px;top:162.5px;width:387.4px;height:0.8px;background:#dbe8f6"></div>
<div class="t" style="left:446.143px;top:148.67px;font-size:7.6px;color:#3a7bd5;transform:scaleX(0.9700);transform-origin:0 0;text-decoration:underline;text-decoration-thickness:.7px">ИВИ23</div>
<div class="t" style="left:508.19px;top:148.58px;font-size:7.7px;color:#363636;transform:scaleX(0.9850);transform-origin:0 0;">0,00 <span class="rb">₽</span></div>
<div class="t" style="left:568.41px;top:148.58px;font-size:7.7px;color:#363636;transform:scaleX(0.9850);transform-origin:0 0;">7 507,69 <span class="rb">₽</span></div>
<div class="t" style="left:644.04px;top:148.58px;font-size:7.7px;color:#363636;transform:scaleX(0.9850);transform-origin:0 0;">0,00 <span class="rb">₽</span></div>
<div class="t" style="left:706.06px;top:148.58px;font-size:7.7px;color:#363636;transform:scaleX(0.9850);transform-origin:0 0;">2 000,00 <span class="rb">₽</span></div>
<div class="t" style="left:769.547px;top:148.58px;font-size:7.7px;color:#363636;transform:scaleX(0.9850);transform-origin:0 0;">-9 507,69 <span class="rb">₽</span></div>
<div class="a" style="left:421px;top:163px;width:10.6px;height:16.3px;background:#e4e6ea;border-bottom:1px solid #c3c7cd;border-right:1px solid #d3d6db"></div>
<div class="a" style="left:431.6px;top:178.8px;width:387.4px;height:0.8px;background:#dbe8f6"></div>
<div class="t" style="left:446.143px;top:164.97px;font-size:7.6px;color:#3a7bd5;transform:scaleX(0.9700);transform-origin:0 0;text-decoration:underline;text-decoration-thickness:.7px">ИВИ24</div>
<div class="t" style="left:508.19px;top:164.88px;font-size:7.7px;color:#363636;transform:scaleX(0.9850);transform-origin:0 0;">0,00 <span class="rb">₽</span></div>
<div class="t" style="left:575.79px;top:164.88px;font-size:7.7px;color:#363636;transform:scaleX(0.9850);transform-origin:0 0;">0,00 <span class="rb">₽</span></div>
<div class="t" style="left:644.04px;top:164.88px;font-size:7.7px;color:#363636;transform:scaleX(0.9850);transform-origin:0 0;">0,00 <span class="rb">₽</span></div>
<div class="t" style="left:706.06px;top:164.88px;font-size:7.7px;color:#363636;transform:scaleX(0.9850);transform-origin:0 0;">4 500,00 <span class="rb">₽</span></div>
<div class="t" style="left:769.547px;top:164.88px;font-size:7.7px;color:#363636;transform:scaleX(0.9850);transform-origin:0 0;">-4 500,00 <span class="rb">₽</span></div>
<div class="a" style="left:482.9px;top:0px;width:0.8px;height:170px;background:#dbe8f6"></div>
<div class="a" style="left:552.5px;top:0px;width:0.8px;height:170px;background:#dbe8f6"></div>
<div class="a" style="left:618.1px;top:0px;width:0.8px;height:170px;background:#dbe8f6"></div>
<div class="a" style="left:689px;top:0px;width:0.8px;height:170px;background:#dbe8f6"></div>
<div class="a" style="left:756.9px;top:0px;width:0.8px;height:170px;background:#dbe8f6"></div>
<div class="a" style="left:818.5px;top:0px;width:0.8px;height:170px;background:#dbe8f6"></div>
</div>
<div class="a" style="left:421.5px;top:322px;width:402px;height:0.8px;background:#c3c7cd"></div>
<div class="a" style="left:823.3px;top:144px;width:8.5px;height:178.3px;background:linear-gradient(90deg,#e9eaec,#f7f7f8 50%,#fff);border-left:1px solid #d9dbdf"></div>
<div class="a" style="left:823.9px;top:145.5px;width:7.5px;height:8px;background:linear-gradient(#fbfbfb,#e6e8eb);border:.6px solid #c9ccd1;border-radius:1px"></div>
<svg style="left:825.5px;top:148px" width="4.4" height="3"><path d="M0 3L2.2 0.3L4.4 3z" fill="#333"/></svg>
<div class="a" style="left:823.9px;top:313.6px;width:7.5px;height:8px;background:linear-gradient(#fbfbfb,#e6e8eb);border:.6px solid #c9ccd1;border-radius:1px"></div>
<svg style="left:825.5px;top:316.2px" width="4.4" height="3"><path d="M0 0L2.2 2.7L4.4 0z" fill="#333"/></svg>
<div class="a" style="left:823.9px;top:154px;width:7.5px;height:62px;background:linear-gradient(90deg,#f6f6f7,#e9eaed);border:.6px solid #d3d6da;border-radius:1px"></div>
<div class="a" style="left:825.7px;top:186px;width:4px;height:3.4px;background:repeating-linear-gradient(#a9acb2 0,#a9acb2 .6px,#e9eaec .6px,#e9eaec 1.2px)"></div>
<div class="a" style="left:832px;top:144.6px;width:48.5px;height:179px;overflow:hidden;background:#a6a6a6">
<div class="a" style="left:0px;top:0px;width:48.5px;height:1px;background:#bfe1f1"></div>
<div class="a" style="left:0px;top:56.4px;width:48.5px;height:2px;background:#e1f2fb"></div>
<div class="a" style="left:0px;top:114.2px;width:48.5px;height:2px;background:#e1f2fb"></div>
<div class="a" style="left:0px;top:177.8px;width:48.5px;height:1.2px;background:#cfe6f2"></div>
<div class="t" style="left:0.290351px;top:17.10px;font-size:6.5px;color:#a3883a;transform:scaleX(.97);transform-origin:0 0">Психологический</div>
<div class="t" style="left:13.9917px;top:25.20px;font-size:6.5px;color:#a3883a;transform:scaleX(.97);transform-origin:0 0">портрет</div>
<div class="t" style="left:7.34801px;top:33.30px;font-size:6.5px;color:#a3883a;transform:scaleX(.97);transform-origin:0 0">сотрудников</div>
<div class="t" style="left:0.351923px;top:75.70px;font-size:6.5px;color:#a3883a;transform:scaleX(.97);transform-origin:0 0">Психологическая</div>
<div class="t" style="left:3.31035px;top:83.80px;font-size:6.5px;color:#a3883a;transform:scaleX(.97);transform-origin:0 0">совместимость</div>
<div class="t" style="left:13.9286px;top:91.90px;font-size:6.5px;color:#a3883a;transform:scaleX(.97);transform-origin:0 0">клиента</div>
<div class="t" style="left:14.9569px;top:140.10px;font-size:6.5px;color:#a3883a;transform:scaleX(.97);transform-origin:0 0">Анализ</div>
<div class="t" style="left:7.17265px;top:148.20px;font-size:6.5px;color:#a3883a;transform:scaleX(.97);transform-origin:0 0">покупателей</div>
</div>
<div class="t" style="left:17.4px;top:330.94px;font-size:8.1px;color:#222;transform:scaleX(0.9710);transform-origin:0 0;text-decoration:underline;text-decoration-thickness:.7px">Новый заказчик</div>
<div class="t" style="left:250.8px;top:329.29px;font-size:8.4px;color:#1a1a1a;transform:scaleX(0.9599);transform-origin:0 0;">Клиенты стадии работ</div>
<div class="a" style="left:580px;top:327.6px;width:148px;height:12.4px;background:#fff;border:1px solid #cdd0d4;border-top-color:#b4b7bc;border-left-color:#b4b7bc"></div>
<div class="t" style="left:582.8px;top:331.18px;font-size:6.4px;color:#3d6ab0;transform:scaleX(0.9671);transform-origin:0 0;">Отчеты</div>
<div class="a" style="left:719.2px;top:328.3px;width:8.4px;height:11.1px;background:linear-gradient(#fafafa,#e2e3e6);border:.8px solid #b0b3b9;border-radius:1px"></div>
<svg style="left:721.3px;top:332.85px" width="4.2" height="2.4"><path d="M0 0h4.2L2.1 2.4z" fill="#111"/></svg>
<div class="a" style="left:5px;top:346.8px;width:827px;height:165px;background:#fff;border:1px solid #c9ccd1"></div>
<div class="a" style="left:5px;top:346.8px;width:10.8px;height:10px;background:linear-gradient(#e5e6e8,#dddee1);border-right:1px solid #cdd0d5;border-bottom:1px solid #cdd0d5"></div>
<svg style="left:8px;top:349px" width="6" height="6"><path d="M6 0L6 6L0 6z" fill="#eceef1"/></svg>
<div class="a" style="left:14.8px;top:346.8px;width:816.7px;height:10px;background:linear-gradient(#e5e6e8,#dddee1);border-bottom:1px solid #d6d9de"></div>
<div class="a" style="left:88.4px;top:346.8px;width:1px;height:10px;background:#cdd0d5"></div>
<div class="t" style="left:36px;top:348.48px;font-size:7.7px;color:#454545;transform:scaleX(0.9999);transform-origin:0 0;">Задача</div>
<svg style="left:83.5px;top:351.8px" width="2.8" height="1.6"><path d="M0 0h2.8L1.4 1.6z" fill="#222"/></svg>
<div class="a" style="left:194.5px;top:346.8px;width:1px;height:10px;background:#cdd0d5"></div>
<div class="t" style="left:129.8px;top:348.48px;font-size:7.7px;color:#454545;transform:scaleX(1.0392);transform-origin:0 0;">Этап</div>
<svg style="left:189.6px;top:351.8px" width="2.8" height="1.6"><path d="M0 0h2.8L1.4 1.6z" fill="#222"/></svg>
<div class="a" style="left:278.2px;top:346.8px;width:1px;height:10px;background:#cdd0d5"></div>
<div class="t" style="left:220.6px;top:348.48px;font-size:7.7px;color:#454545;transform:scaleX(1.0101);transform-origin:0 0;">Стадия</div>
<svg style="left:273.3px;top:351.8px" width="2.8" height="1.6"><path d="M0 0h2.8L1.4 1.6z" fill="#222"/></svg>
<div class="a" style="left:335.5px;top:346.8px;width:1px;height:10px;background:#cdd0d5"></div>
<div class="t" style="left:295.6px;top:348.48px;font-size:7.7px;color:#454545;transform:scaleX(1.0054);transform-origin:0 0;">Дата</div>
<svg style="left:330.6px;top:351.8px" width="2.8" height="1.6"><path d="M0 0h2.8L1.4 1.6z" fill="#222"/></svg>
<div class="a" style="left:392.4px;top:346.8px;width:1px;height:10px;background:#cdd0d5"></div>
<div class="t" style="left:350px;top:348.48px;font-size:7.7px;color:#454545;transform:scaleX(0.9929);transform-origin:0 0;">Время</div>
<svg style="left:387.5px;top:351.8px" width="2.8" height="1.6"><path d="M0 0h2.8L1.4 1.6z" fill="#222"/></svg>
<div class="a" style="left:432.4px;top:346.8px;width:1px;height:10px;background:#cdd0d5"></div>
<div class="a" style="left:396.3px;top:346.8px;width:27px;height:10px;overflow:hidden">
<div class="t" style="left:0px;top:1.68px;font-size:7.7px;color:#454545;transform:scaleX(1.0000);transform-origin:0 0;">Вероятность</div>
</div>
<svg style="left:427.5px;top:351.8px" width="2.8" height="1.6"><path d="M0 0h2.8L1.4 1.6z" fill="#222"/></svg>
<div class="a" style="left:537.8px;top:346.8px;width:1px;height:10px;background:#cdd0d5"></div>
<div class="t" style="left:442.5px;top:348.48px;font-size:7.7px;color:#454545;transform:scaleX(1.0106);transform-origin:0 0;">Оценочная стоимочть</div>
<svg style="left:532.9px;top:351.8px" width="2.8" height="1.6"><path d="M0 0h2.8L1.4 1.6z" fill="#222"/></svg>
<div class="a" style="left:643.4px;top:346.8px;width:1px;height:10px;background:#cdd0d5"></div>
<div class="t" style="left:574.2px;top:348.48px;font-size:7.7px;color:#454545;transform:scaleX(0.9563);transform-origin:0 0;">Интерес</div>
<svg style="left:638.5px;top:351.8px" width="2.8" height="1.6"><path d="M0 0h2.8L1.4 1.6z" fill="#222"/></svg>
<div class="a" style="left:744.4px;top:346.8px;width:1px;height:10px;background:#cdd0d5"></div>
<div class="a" style="left:647.3px;top:346.8px;width:88.4px;height:10px;overflow:hidden">
<div class="t" style="left:0px;top:1.68px;font-size:7.7px;color:#454545;transform:scaleX(0.9900);transform-origin:0 0;">Психологический портрет</div>
</div>
<svg style="left:739.5px;top:351.8px" width="2.8" height="1.6"><path d="M0 0h2.8L1.4 1.6z" fill="#222"/></svg>
<div class="a" style="left:830.5px;top:346.8px;width:1px;height:10px;background:#cdd0d5"></div>
<div class="t" style="left:763.4px;top:348.48px;font-size:7.7px;color:#454545;transform:scaleX(0.9905);transform-origin:0 0;">Примечание</div>
<svg style="left:825.6px;top:351.8px" width="2.8" height="1.6"><path d="M0 0h2.8L1.4 1.6z" fill="#222"/></svg>
<div class="a" style="left:5.8px;top:356.8px;width:10px;height:147.5px;background:#f3f5f8;border-right:1px solid #e6e9ee"></div>
<div class="a" style="left:5.8px;top:367.2px;width:10px;height:10.2px;background:#e4e6ea"></div>
<div class="a" style="left:15.8px;top:366.7px;width:815.5px;height:0.7px;background:#f5f8fc"></div>
<div class="a" style="left:15.8px;top:377px;width:815.5px;height:0.7px;background:#f5f8fc"></div>
<div class="a" style="left:15.8px;top:387.3px;width:815.5px;height:0.7px;background:#f5f8fc"></div>
<div class="a" style="left:15.8px;top:397.6px;width:815.5px;height:0.7px;background:#f5f8fc"></div>
<div class="a" style="left:15.8px;top:407.9px;width:815.5px;height:0.7px;background:#f5f8fc"></div>
<div class="a" style="left:15.8px;top:418.2px;width:815.5px;height:0.7px;background:#f5f8fc"></div>
<div class="a" style="left:15.8px;top:428.5px;width:815.5px;height:0.7px;background:#f5f8fc"></div>
<div class="a" style="left:15.8px;top:438.8px;width:815.5px;height:0.7px;background:#f5f8fc"></div>
<div class="a" style="left:15.8px;top:449.1px;width:815.5px;height:0.7px;background:#f5f8fc"></div>
<div class="a" style="left:15.8px;top:459.4px;width:815.5px;height:0.7px;background:#f5f8fc"></div>
<div class="a" style="left:15.8px;top:469.7px;width:815.5px;height:0.7px;background:#f5f8fc"></div>
<div class="a" style="left:15.8px;top:480px;width:815.5px;height:0.7px;background:#f5f8fc"></div>
<div class="a" style="left:15.8px;top:490.3px;width:815.5px;height:0.7px;background:#f5f8fc"></div>
<div class="a" style="left:15.8px;top:500.6px;width:815.5px;height:0.7px;background:#f5f8fc"></div>
<div class="a" style="left:88.9px;top:356.8px;width:0.7px;height:147.5px;background:#f5f8fc"></div>
<div class="a" style="left:195px;top:356.8px;width:0.7px;height:147.5px;background:#f5f8fc"></div>
<div class="a" style="left:278.7px;top:356.8px;width:0.7px;height:147.5px;background:#f5f8fc"></div>
<div class="a" style="left:336px;top:356.8px;width:0.7px;height:147.5px;background:#f5f8fc"></div>
<div class="a" style="left:392.9px;top:356.8px;width:0.7px;height:147.5px;background:#f5f8fc"></div>
<div class="a" style="left:432.9px;top:356.8px;width:0.7px;height:147.5px;background:#f5f8fc"></div>
<div class="a" style="left:538.3px;top:356.8px;width:0.7px;height:147.5px;background:#f5f8fc"></div>
<div class="a" style="left:643.9px;top:356.8px;width:0.7px;height:147.5px;background:#f5f8fc"></div>
<div class="a" style="left:744.9px;top:356.8px;width:0.7px;height:147.5px;background:#f5f8fc"></div>
<div class="a" style="left:831px;top:356.8px;width:0.7px;height:147.5px;background:#f5f8fc"></div>
<div class="a" style="left:15.8px;top:377px;width:815.5px;height:1px;background:#dfeaf7"></div>
<div class="a" style="left:89.4px;top:356.8px;width:742.1px;height:10.5px;background:#b4d6fa"></div>
<div class="t" style="left:17.4px;top:358.50px;font-size:7.8px;color:#111;transform:scaleX(0.9825);transform-origin:0 0;">Счет</div>
<div class="t" style="left:91.7px;top:358.50px;font-size:7.8px;color:#111;transform:scaleX(1.0276);transform-origin:0 0;">Касса</div>
<div class="t" style="left:197.2px;top:358.50px;font-size:7.8px;color:#111;transform:scaleX(0.9700);transform-origin:0 0;">Утверждение</div>
<div class="t" style="left:298.4px;top:358.50px;font-size:7.8px;color:#111;transform:scaleX(0.9350);transform-origin:0 0;">14.03.2017</div>
<div class="t" style="left:364px;top:358.50px;font-size:7.8px;color:#111;transform:scaleX(0.9485);transform-origin:0 0;">14:02:00</div>
<div class="t" style="left:364px;top:368.50px;font-size:7.8px;color:#363636;transform:scaleX(0.9485);transform-origin:0 0;">12:12:00</div>
<div class="t" style="left:423.2px;top:358.50px;font-size:7.8px;color:#111;transform:scaleX(1.0488);transform-origin:0 0;">90</div>
<div class="t" style="left:495.7px;top:358.50px;font-size:7.8px;color:#111;transform:scaleX(0.9821);transform-origin:0 0;">12 650,00 <span class="rb">₽</span></div>
<div class="t" style="left:541.2px;top:358.50px;font-size:7.8px;color:#111;transform:scaleX(1.0016);transform-origin:0 0;">Стандартный комплект № 2</div>
<div class="t" style="left:647.2px;top:358.50px;font-size:7.8px;color:#111;transform:scaleX(0.9855);transform-origin:0 0;">Уверенный</div>
<div class="a" style="left:5.6px;top:504.3px;width:825.8px;height:7.5px;background:linear-gradient(#e4e5e8,#f3f3f5 50%,#fbfbfc);border-top:1px solid #d6d8dc"></div>
<div class="a" style="left:5.9px;top:504.8px;width:7.6px;height:6.5px;background:linear-gradient(#fbfbfb,#e6e8eb);border:.6px solid #c9ccd1;border-radius:1px"></div>
<svg style="left:8px;top:505.85px" width="3" height="4.4"><path d="M3 0L0.3 2.2L3 4.4z" fill="#333"/></svg>
<div class="a" style="left:823.5px;top:504.8px;width:7.6px;height:6.5px;background:linear-gradient(#fbfbfb,#e6e8eb);border:.6px solid #c9ccd1;border-radius:1px"></div>
<svg style="left:826.1px;top:505.85px" width="3" height="4.4"><path d="M0 0L2.7 2.2L0 4.4z" fill="#333"/></svg>
<div class="a" style="left:14px;top:505px;width:444.5px;height:6.3px;background:linear-gradient(#f8f8f9,#e6e7ea);border:.6px solid #c9ccd1;border-radius:1px"></div>
<div class="a" style="left:234.25px;top:506.45px;width:4px;height:3.4px;background:repeating-linear-gradient(90deg,#a9acb2 0,#a9acb2 .6px,#e9eaec .6px,#e9eaec 1.2px)"></div>
<div class="a" style="left:0px;top:512.3px;width:890px;height:10px;background:#f0f0f0"></div>
<div class="a" style="left:0px;top:512.3px;width:1px;height:10px;background:#6e7176"></div>
<div class="a" style="left:1.6px;top:513.3px;width:878.7px;height:9px;background:linear-gradient(#e4e5e8,#f3f3f5 50%,#fbfbfc);border-top:1px solid #d6d8dc"></div>
<div class="a" style="left:1.9px;top:513.8px;width:7.6px;height:8px;background:linear-gradient(#fbfbfb,#e6e8eb);border:.6px solid #c9ccd1;border-radius:1px"></div>
<svg style="left:4px;top:515.6px" width="3" height="4.4"><path d="M3 0L0.3 2.2L3 4.4z" fill="#333"/></svg>
<div class="a" style="left:872.4px;top:513.8px;width:7.6px;height:8px;background:linear-gradient(#fbfbfb,#e6e8eb);border:.6px solid #c9ccd1;border-radius:1px"></div>
<svg style="left:875px;top:515.6px" width="3" height="4.4"><path d="M0 0L2.7 2.2L0 4.4z" fill="#333"/></svg>
<div class="a" style="left:10px;top:514px;width:854px;height:7.8px;background:linear-gradient(#f8f8f9,#e6e7ea);border:.6px solid #c9ccd1;border-radius:1px"></div>
<div class="a" style="left:435px;top:516.2px;width:4px;height:3.4px;background:repeating-linear-gradient(90deg,#a9acb2 0,#a9acb2 .6px,#e9eaec .6px,#e9eaec 1.2px)"></div>
<div class="a" style="left:0px;top:522.1px;width:890px;height:12.8px;background:linear-gradient(#f3f4f6 0,#e6e8ec 35%,#d6d9df 70%,#c3c7ce 100%);border-top:1px solid #c6c9cf"></div>
<div class="t" style="left:4.4px;top:525.57px;font-size:6.3px;color:#333;transform:scaleX(0.9467);transform-origin:0 0;">Form View</div>
<div class="a" style="left:444.3px;top:524px;width:0.7px;height:10px;background:#8f9298"></div>
<div class="t" style="left:805.8px;top:525.47px;font-size:6.3px;color:#4a4a4a;transform:scaleX(0.9203);transform-origin:0 0;">Num Lock</div>
<div class="a" style="left:837px;top:524px;width:0.7px;height:10px;background:#b5b8be"></div>
<div class="a" style="left:840.4px;top:524.6px;width:9.8px;height:9.8px;background:#fdeba4;border:1px solid #e8b73a;border-radius:1px"></div>
<div class="a" style="left:843px;top:527.6px;width:5px;height:4px;background:#fff;border:.6px solid #777"></div>
<div class="a" style="left:845.2px;top:529.2px;width:2.6px;height:1.8px;background:#c8a040"></div>
<div class="a" style="left:852.4px;top:527.4px;width:5.8px;height:4.6px;background:#eceef1;border:.6px solid #8a8d93"></div>
<div class="a" style="left:854.4px;top:526.2px;width:3px;height:2.4px;background:#a6a9af"></div>
<div class="a" style="left:861.6px;top:527.4px;width:5.8px;height:4.6px;background:#eceef1;border:.6px solid #8a8d93"></div>
<div class="a" style="left:863.6px;top:526.2px;width:3px;height:2.4px;background:#a6a9af"></div>
<div class="a" style="left:870.8px;top:527.4px;width:5.8px;height:4.6px;background:#eceef1;border:.6px solid #8a8d93"></div>
<div class="a" style="left:872.8px;top:526.2px;width:3px;height:2.4px;background:#a6a9af"></div>
<div class="a" style="left:881px;top:527.4px;width:5.8px;height:4.6px;background:#eceef1;border:.6px solid #8a8d93"></div>
<div class="a" style="left:883px;top:526.2px;width:3px;height:2.4px;background:#a6a9af"></div>
<div class="a" style="left:0px;top:534.8px;width:890px;height:21.2px;background:linear-gradient(90deg,#1f68b0 0,#2478c0 20px,#2b85cb 40px,#3393d4 150px,#3a9ad8 240px,#2f88cd 330px,#2678c3 440px,#2274c0 480px,#2e80c6 525px,#2267b0 575px,#1d5499 640px,#1b4a8a 700px,#1a437e 890px)"></div>
<div class="a" style="left:0px;top:534.8px;width:890px;height:1px;background:rgba(255,255,255,.35)"></div>
<svg style="left:630px;top:536px" width="50" height="20"><path d="M10 0Q26 6 38 20" fill="none" stroke="rgba(190,225,250,.7)" stroke-width="1.6"/></svg>
<div class="a" style="left:4.2px;top:536.6px;width:20px;height:20px;border-radius:50%;background:radial-gradient(circle at 50% 30%,#8cc8f0,#2a7cc8 55%,#0e3f7e);border:1px solid #0d3a70;box-shadow:0 0 1.5px #9cf"></div>
<svg style="left:8.8px;top:541.4px" width="11.4" height="10.4" viewBox="0 0 11 10"><path d="M0.5 1.6Q2.6 0.4 5 1.6L4.4 4.6Q2.4 3.6 0 4.6z" fill="#e8553a"/><path d="M5.8 1.8Q8 2.8 10.6 1.6L10 4.6Q7.6 5.6 5.2 4.7z" fill="#7fc241"/><path d="M-.2 5.4Q2 4.4 4.2 5.4L3.6 8.4Q1.6 7.6-.8 8.6z" fill="#3f9be0"/><path d="M5 5.5Q7.4 6.6 9.8 5.4L9.2 8.4Q6.8 9.6 4.4 8.5z" fill="#f7c52d"/></svg>
<div class="a" style="left:31.8px;top:535.3px;width:30.7px;height:20.7px;background:linear-gradient(rgba(255,255,255,.42),rgba(255,255,255,.16));border:1px solid rgba(255,255,255,.5);border-radius:1px"></div>
<svg style="left:38.3px;top:538px" width="18" height="15.3" viewBox="0 0 16 15"><path d="M0.5 3.5h5l1-1.5h8.5v12h-14.5z" fill="#f3d878" stroke="#c9a43a" stroke-width=".6"/><rect x="2" y="3" width="11" height="3" fill="#fff"/><rect x="3" y="3.4" width="1.6" height="1" fill="#5a5"/><rect x="6" y="3.4" width="1.6" height="1" fill="#d55"/><path d="M0.5 6h15v8h-15z" fill="#f7e59a"/><rect x="3" y="10" width="10" height="4.5" fill="#8fd0e8"/></svg>
<svg style="left:73.7px;top:538px" width="11.8" height="14.8" viewBox="0 0 12 15"><rect x="0.3" y="0.3" width="11.4" height="14.4" rx="1" fill="#dfe7f2" stroke="#8aa0bf" stroke-width=".6"/><rect x="1.5" y="1.5" width="9" height="3.4" fill="#9fc6ee"/><g fill="#f4f7fb" stroke="#9ab" stroke-width=".3"><rect x="1.5" y="6" width="2.5" height="2"/><rect x="4.8" y="6" width="2.5" height="2"/><rect x="8.1" y="6" width="2.5" height="2"/><rect x="1.5" y="8.8" width="2.5" height="2"/><rect x="4.8" y="8.8" width="2.5" height="2"/><rect x="8.1" y="8.8" width="2.5" height="2"/><rect x="1.5" y="11.6" width="2.5" height="2"/><rect x="4.8" y="11.6" width="2.5" height="2"/></g><rect x="8.1" y="11.6" width="2.5" height="2" fill="#f0c040"/></svg>
<div class="a" style="left:104.5px;top:537.2px;width:16.8px;height:16.3px;background:#d6202c;border:.5px solid #b01822"></div>
<div class="t" style="left:106px;top:536.2px;font-size:13px;color:#fff;font-family:'Liberation Serif',serif;transform:scaleX(.83);transform-origin:0 0">FX</div>
<div class="t" style="left:106px;top:545.7px;font-size:7.6px;color:#fff;font-family:'Liberation Serif',serif;transform:scaleX(.97);transform-origin:0 0">PRO</div>
<div class="a" style="left:138.6px;top:539.8px;width:13px;height:12px;background:linear-gradient(#bcd6ee,#86b2dc);border:.5px solid #6a96c8"></div>
<div class="a" style="left:138.8px;top:540.6px;width:10px;height:10px;background:radial-gradient(circle,#ffb648,#ef7a12);border-radius:50%;border:.8px solid #f6d0a0"></div>
<svg style="left:142.4px;top:543px" width="4.6" height="5.4"><path d="M0 0L4.6 2.7L0 5.4z" fill="#fff"/></svg>
<div class="a" style="left:170.8px;top:538px;width:15.7px;height:14.6px;background:linear-gradient(#fdfdfd,#e8e8e8);border:.8px solid #8a8a8a;border-radius:1.5px"></div>
<div class="a" style="left:172px;top:541px;width:13.3px;height:10.6px;background:#fafafa;border:.5px solid #bbb"></div>
<svg style="left:174.6px;top:542.4px" width="8" height="8"><path d="M4 0.5v7M0.5 4h7" stroke="#4caf3a" stroke-width="2.3"/></svg>
<div class="a" style="left:180px;top:539.2px;width:1px;height:0.8px;background:#777"></div>
<div class="a" style="left:182px;top:539.2px;width:1px;height:0.8px;background:#777"></div>
<div class="a" style="left:184px;top:539.2px;width:1px;height:0.8px;background:#777"></div>
<div class="a" style="left:195.2px;top:535.3px;width:32.2px;height:20.7px;background:linear-gradient(rgba(255,255,255,.78),rgba(225,240,255,.55));border:1px solid rgba(255,255,255,.85);border-radius:1px"></div>
<div class="a" style="left:203px;top:537.6px;width:13px;height:13.6px;background:linear-gradient(135deg,#f7c4d8,#ea8cb2 60%,#e070a0);border:.6px solid #c03878;border-radius:1px"></div>
<div class="t" style="left:204.6px;top:538.2px;font-size:12.4px;color:#a8145a;font-weight:bold">A</div>
<div class="a" style="left:212.4px;top:541.2px;width:7px;height:5.6px;background:#fdf0f5;border:.5px solid #d884a8;transform:skewY(-8deg)"></div>
<svg style="left:206px;top:547.6px" width="13" height="6"><path d="M0 5L6 1L13 3L7.5 6z" fill="#fbe0ea" stroke="#d06090" stroke-width=".4"/></svg>
<div class="t" style="left:789.8px;top:540.88px;font-size:6.4px;color:#e6eef8;transform:scaleX(0.7572);transform-origin:0 0;">RU</div>
<svg style="left:806.6px;top:546px" width="4" height="3"><path d="M0 2.6L2 0.2L4 2.6z" fill="#fff"/></svg>
<div class="a" style="left:818.6px;top:543px;width:6.5px;height:6px;border:1px solid #fff;background:#1d4a82"></div>
<div class="a" style="left:817px;top:542px;width:2.6px;height:3px;background:#fff"></div>
<svg style="left:830px;top:542px" width="8" height="8" viewBox="0 0 8 8"><path d="M0.3 0.5h2.4v2h2.6v-2h2.4v4l-2.4 1.5h-2.6l-2.4-1.5z" fill="#fff"/><path d="M2.6 6.4h2.8l-1.4 1.4z" fill="#fff"/></svg>
<div class="t" style="left:857px;top:537.90px;font-size:6.5px;color:#f2f6fb;transform:scaleX(0.8379);transform-origin:0 0;">2:29</div>
<div class="t" style="left:847.3px;top:546.70px;font-size:6.5px;color:#f2f6fb;transform:scaleX(0.8914);transform-origin:0 0;">01.02.2018</div>
<div class="a" style="left:883.5px;top:535px;width:6.5px;height:21px;background:linear-gradient(90deg,rgba(255,255,255,.05),rgba(255,255,255,.22));border-left:1px solid rgba(255,255,255,.3)"></div>
<div class="a" style="left:38.5px;top:61.7px;width:125.6px;height:36.6px;background:#fff;border:1px solid #c9ccd1;box-shadow:1px 1.2px 2px rgba(0,0,0,.32)"></div>
<div class="a" style="left:52.4px;top:62.8px;width:0.6px;height:34.4px;background:#eceef1"></div>
<div class="t" style="left:57.1px;top:65.60px;font-size:6.5px;color:#333;transform:scaleX(0.9411);transform-origin:0 0;">Прием на работу/Установка прав</div>
<div class="t" style="left:57.1px;top:77.00px;font-size:6.5px;color:#333;transform:scaleX(0.9180);transform-origin:0 0;">Смена пароля</div>
<div class="t" style="left:57.1px;top:88.70px;font-size:6.5px;color:#333;transform:scaleX(0.9570);transform-origin:0 0;">Отчетный период</div>
<div class="a" style="left:42.1px;top:65.5px;width:7px;height:6.4px;background:#f6d27a;border:.6px solid #c89a2e"></div>
<div class="a" style="left:43.8px;top:67.2px;width:3.4px;height:3px;background:#3a5fc0"></div>
<svg style="left:41.8px;top:76px" width="8" height="7.6" viewBox="0 0 8 8"><rect x="2" y="1.5" width="5.6" height="6" fill="#eef2f8" stroke="#6a7f9f" stroke-width=".5"/><rect x="2.2" y="0.6" width="5.2" height="2" fill="#8fb83a"/><rect x="4.6" y="0.6" width="2.8" height="2" fill="#e8c040"/><path d="M0 4.8L2.4 3v1.2h2v1.4h-2v1.2z" fill="#2f6fd0"/></svg>
<div class="a" style="left:42.3px;top:88.5px;width:6.6px;height:6.6px;border-radius:50%;background:radial-gradient(circle at 50% 45%,#fff 0,#eef3fc 30%,#a9c0ec 70%,#7f9fe0 100%);border:.5px solid #9ab2e6"></div>
<div class="a" style="left:44.6px;top:90.4px;width:2.2px;height:2.6px;border-left:.7px solid #5a78c8;border-bottom:.7px solid #5a78c8"></div>
</div></body></html>
